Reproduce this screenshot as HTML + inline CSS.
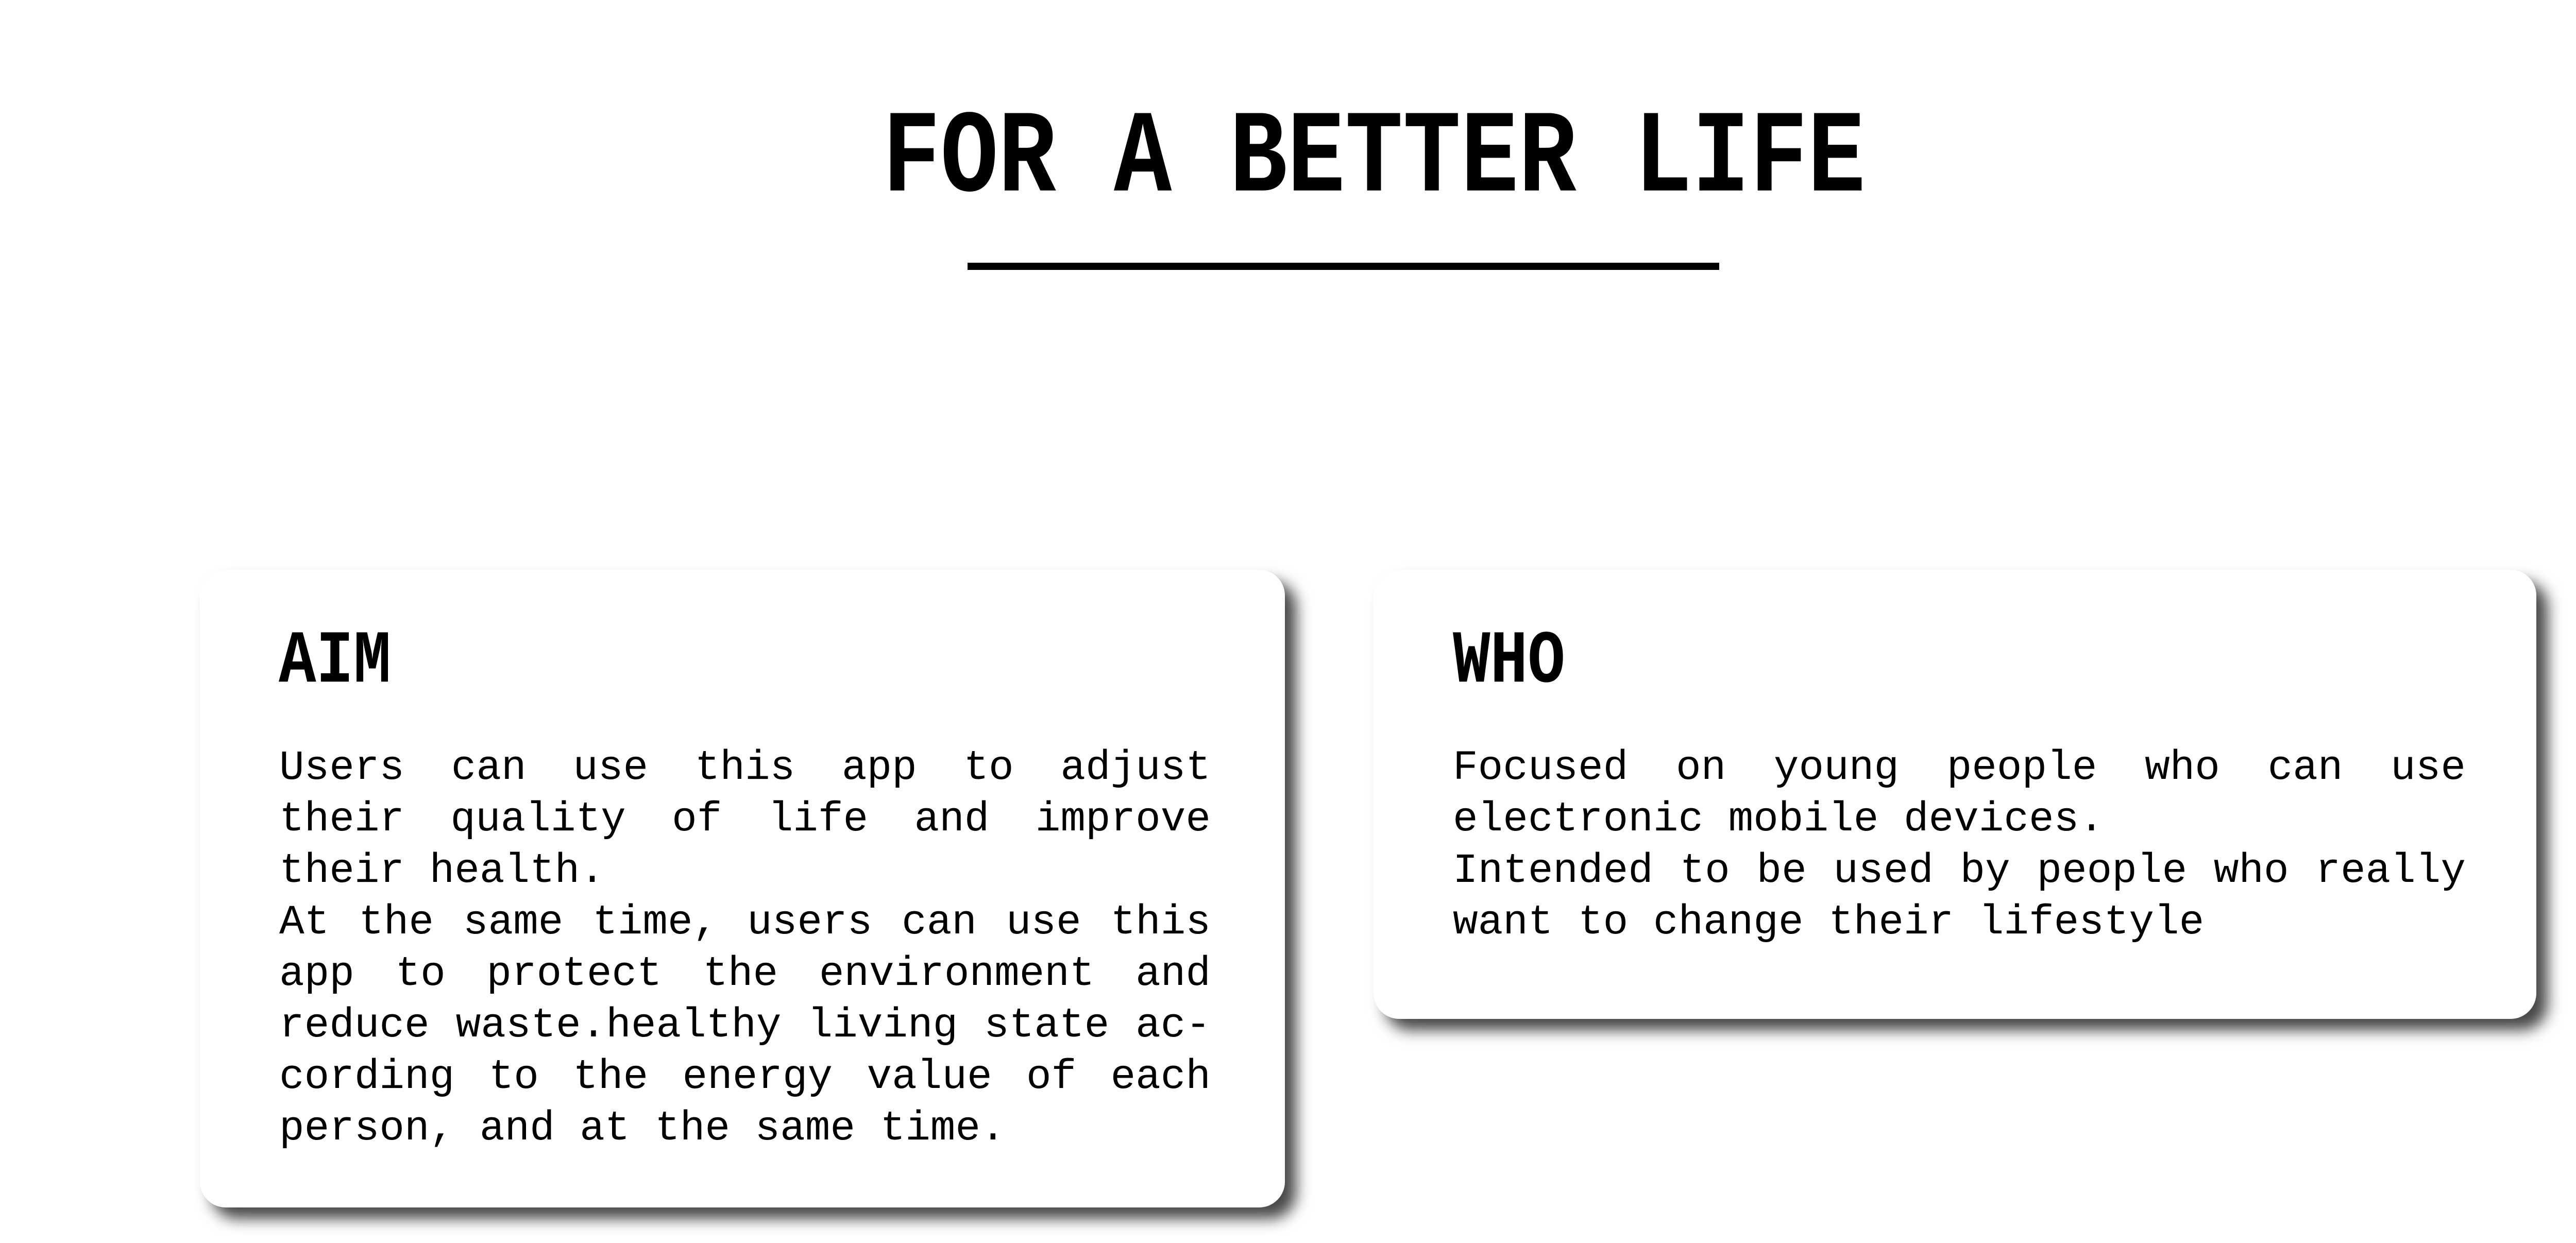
<!DOCTYPE html>
<html><head><meta charset="utf-8"><style>
html,body{margin:0;padding:0;background:#fff;width:5334px;height:2413px;overflow:hidden;position:relative;font-family:"Liberation Mono",monospace;color:#000}
.title{position:absolute;left:0;width:5334px;top:200px;text-align:center;font-weight:bold;font-size:187px;line-height:220px;transform:scaleY(1.22);transform-origin:50% 50%}
.rule{position:absolute;left:1878px;top:510px;width:1459px;height:14px;background:#000}
.card{position:absolute;background:#fff;border-radius:50px;box-shadow:22px 22px 28px rgba(0,0,0,0.72)}
.h{position:absolute;font-weight:bold;font-size:121px;line-height:121px;transform:scaleY(1.2);transform-origin:0 100%}
.p{position:absolute;font-size:81px;line-height:100px}
.p span{display:block;white-space:nowrap;text-align:left;height:100px}
.p span.j{text-align:justify;text-align-last:justify}
</style></head><body>
<div class="title">FOR A BETTER LIFE</div>
<div class="rule"></div>
<div class="card" style="left:388px;top:1106px;width:2106px;height:1238px"></div>
<div class="card" style="left:2666px;top:1106px;width:2257px;height:872px"></div>
<div class="h" style="left:541px;top:1237px">AIM</div>
<div class="h" style="left:2820px;top:1237px">WHO</div>
<div class="p" style="left:542px;top:1442px;width:1808px">
<span class="j">Users can use this app to adjust</span>
<span class="j">their quality of life and improve</span>
<span>their health.</span>
<span class="j">At the same time, users can use this</span>
<span class="j">app to protect the environment and</span>
<span class="j">reduce waste.healthy living state ac-</span>
<span class="j">cording to the energy value of each</span>
<span>person, and at the same time.</span>
</div>
<div class="p" style="left:2820px;top:1442px;width:1966px">
<span class="j">Focused on young people who can use</span>
<span>electronic mobile devices.</span>
<span class="j">Intended to be used by people who really</span>
<span>want to change their lifestyle</span>
</div>
</body></html>
